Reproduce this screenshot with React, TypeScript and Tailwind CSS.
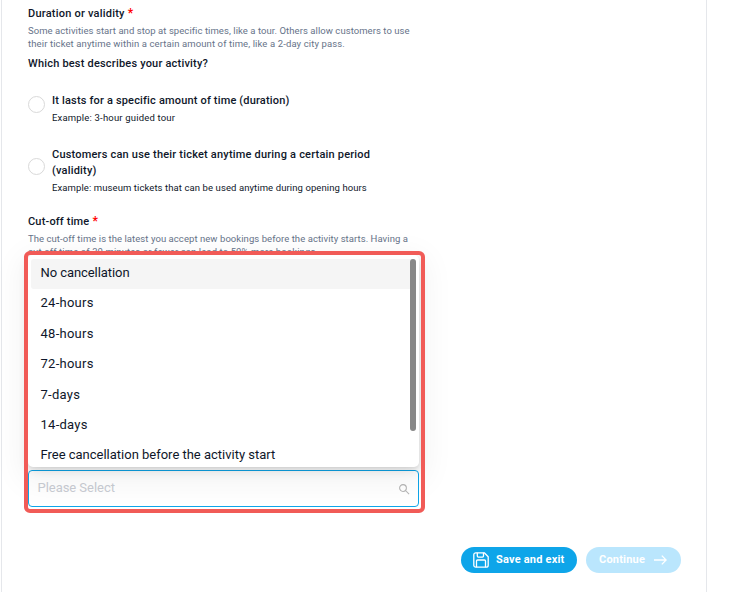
const options = [
  { label: 'No cancellation', spacing: 'tracking-[-0.07px]' },
  { label: '24-hours', spacing: 'tracking-[0.26px]' },
  { label: '48-hours', spacing: 'tracking-[0.26px]' },
  { label: '72-hours', spacing: 'tracking-[0.26px]' },
  { label: '7-days', spacing: 'tracking-[0.26px]' },
  { label: '14-days', spacing: 'tracking-[0.26px]' },
  { label: 'Free cancellation before the activity start', spacing: 'tracking-[-0.01px]' },
];

function Required() {
  return <span className="ml-[3px] text-[12px] font-bold leading-none text-[#ff0000]">*</span>;
}

function SaveIcon() {
  return (
    <svg className="size-4" viewBox="0 0 16 16" fill="none" stroke="currentColor" strokeWidth="1.3" strokeLinejoin="round">
      <path d="M2.8.8h8.5l3.9 4v8.4a2 2 0 0 1-2 2H2.8a2 2 0 0 1-2-2V2.8a2 2 0 0 1 2-2Z" />
      <path d="M4.3.8v3.3a1 1 0 0 0 1 1h4.2a1 1 0 0 0 1-1V.8M3.5 15.2V9a1 1 0 0 1 1-1h7a1 1 0 0 1 1 1v6.2" />
    </svg>
  );
}

function CutoffSelect() {
  return (
    <div className="relative mt-[212px] h-[37px] w-[391px]">
      <div className="flex h-full items-center justify-between rounded-[4px] border border-[#0ea5e9] bg-white pl-[8.5px] pr-[8px]">
        <span className="-mt-[2px] text-[13px] tracking-[-0.04px] text-[#c9ccd3]">Please Select</span>
        <svg className="size-[12px] text-[#b5b5b5]" viewBox="0 0 12 12" fill="none" stroke="currentColor" strokeWidth="1.05">
          <circle cx="5" cy="5" r="3.4" />
          <path d="m7.5 7.5 3.6 3.6" />
        </svg>
      </div>
      <div className="absolute bottom-[40px] left-0 h-[212px] w-[391px] overflow-hidden rounded-[5px] bg-white pl-[3px] pr-[3px] pt-[4px] shadow-[0_4px_11px_rgba(0,0,0,0.09),0_2px_4px_rgba(0,0,0,0.08),0_8px_30px_8px_rgba(0,0,0,0.05)]">
        {options.map((option, i) => (
          <div
            key={option.label}
            className={`flex h-[30.4px] items-center whitespace-nowrap rounded-[3px] pl-[9.5px] pb-[3px] text-[13px] ${option.spacing} ${i === 0 ? 'bg-[#f5f5f5]' : ''}`}
          >
            {option.label}
          </div>
        ))}
        <span className="absolute right-[3px] top-[4px] h-[172px] w-[6px] rounded-full bg-[#888888]" />
      </div>
      <div className="pointer-events-none absolute -left-[4px] -top-[219px] h-[262px] w-[401px] rounded-[6px] border-4 border-[#f15b57]" />
    </div>
  );
}

export default function App() {
  return (
    <div className="h-[592px] w-[732px] overflow-hidden bg-white pl-px font-['Roboto',sans-serif] text-[#0f172a]">
      <main className="flex h-full w-[706px] flex-col border-x border-[#e5e7eb] pl-[26px] pt-[6px]">
        <h2 className="h-4 whitespace-nowrap text-[11px] font-medium leading-4 tracking-[0.22px]">
          Duration or validity<Required />
        </h2>
        <p className="mt-[2px] whitespace-nowrap text-[9.5px] leading-[13px] tracking-[0.06px] text-[#667389]">
          Some activities start and stop at specific times, like a tour. Others allow customers to use
          <br />
          <span className="tracking-[0.11px]">their ticket anytime within a certain amount of time, like a 2-day city pass.</span>
        </p>
        <h3 className="mt-[6px] h-4 text-[11px] font-medium leading-4 tracking-[0.2px]">Which best describes your activity?</h3>

        <div className="mt-[21px] flex items-start gap-[7px]">
          <span className="mt-[3px] size-[17px] shrink-0 rounded-full border border-[#d9d9d9] bg-white" />
          <div className="whitespace-nowrap">
            <div className="text-[11px] font-medium leading-4 tracking-[0.17px]">It lasts for a specific amount of time (duration)</div>
            <div className="mb-px mt-[2px] text-[9.5px] leading-[14px] tracking-[0.18px]">Example: 3-hour guided tour</div>
          </div>
        </div>
        <div className="mt-[21px] flex items-start gap-[7px]">
          <span className="mt-[11px] size-[17px] shrink-0 rounded-full border border-[#d9d9d9] bg-white" />
          <div className="whitespace-nowrap">
            <div className="text-[11px] font-medium leading-4 tracking-[0.2px]">
              Customers can use their ticket anytime during a certain period
              <br />
              (validity)
            </div>
            <div className="mb-px mt-[2px] text-[9.5px] leading-[14px] tracking-[0.09px]">
              Example: museum tickets that can be used anytime during opening hours
            </div>
          </div>
        </div>

        <h2 className="mt-[18px] h-4 whitespace-nowrap text-[11px] font-medium leading-4 tracking-[0.17px]">
          Cut-off time<Required />
        </h2>
        <p className="mt-[3px] whitespace-nowrap text-[9.5px] leading-[12.5px] tracking-[0.06px] text-[#667389]">
          The cut-off time is the latest you accept new bookings before the activity starts. Having a
          <br />
          <span className="tracking-[0.1px]">cut-off time of 30 minutes or fewer can lead to 50% more bookings.</span>
        </p>
        <CutoffSelect />

        <div className="mt-[40px] flex gap-[9px] pl-[433px] text-[11px] font-bold text-white">
          <button className="flex h-[26px] w-[116px] items-center gap-[7px] rounded-full bg-[#0ea5e9] pl-[12px] tracking-[0.2px]">
            <SaveIcon />
            Save and exit
          </button>
          <button className="flex h-[26px] w-[95px] items-center gap-[9px] rounded-full bg-[#bae6fd] pl-[13px] tracking-[0.2px]">
            Continue
            <svg className="h-[10px] w-[13px]" viewBox="0 0 13 10" fill="none" stroke="currentColor" strokeWidth="1.3">
              <path d="M0 5h12M7.8.6 12.2 5 7.8 9.4" />
            </svg>
          </button>
        </div>
      </main>
    </div>
  );
}
